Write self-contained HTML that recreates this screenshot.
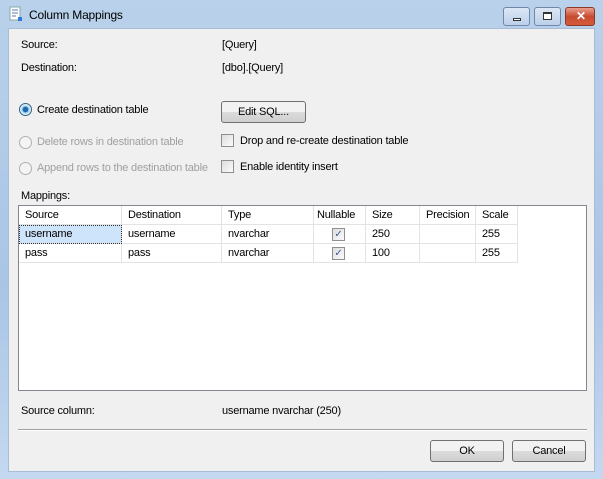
<!DOCTYPE html>
<html><head><style>
*{margin:0;padding:0;box-sizing:border-box}
body{width:603px;height:479px;overflow:hidden;font-family:"Liberation Sans",sans-serif;font-size:11px;letter-spacing:-0.2px;color:#000;
background:linear-gradient(#b9d1ea,#a9c5e6 60%,#c4d9f0);position:relative}
.a{position:absolute;white-space:nowrap}
#client{position:absolute;left:8px;top:28px;width:587px;height:444px;background:#f0f0f0;border:1px solid #a8bcd4}
.btn{position:absolute;border:1px solid #707070;border-radius:3px;background:linear-gradient(#f2f2f2 50%,#dcdcdc 50%,#cfcfcf);text-align:center}
.cb{position:absolute;width:13px;height:13px;border:1px solid #8f8f8f;background:linear-gradient(135deg,#ddd,#fbfbfb)}
.rad{position:absolute;width:13px;height:13px;border-radius:50%;border:1px solid #b0b0b0;background:#f4f4f4}
.dis{color:#a0a0a0}
.tb{position:absolute;left:18px;top:205px;width:569px;height:186px;background:#fff;border:1px solid #828790}
.cell{position:absolute;height:19px;line-height:19px;padding-left:6px;border-right:1px solid #e3e3e3;border-bottom:1px solid #e3e3e3}
.wb{position:absolute;top:7px;height:19px;border:1px solid #6f87a8;border-radius:3px;background:linear-gradient(#dbe7f5,#bcd0ea)}
</style></head><body>
<svg class="a" style="left:9px;top:6px" width="14" height="16"><rect x="1" y="1" width="10" height="13" fill="#fff" stroke="#8aa"/><path d="M3 4h6M3 7h6M3 10h4" stroke="#67a" /><rect x="9" y="11" width="4" height="4" fill="#2a7ad8"/></svg>
<div class="a" style="left:29px;top:8px;font-size:12px;color:#000">Column Mappings</div>
<div class="wb" style="left:503px;width:27px"><div class="a" style="left:9px;top:10px;width:8px;height:3px;border:1px solid #333;background:#fff"></div></div>
<div class="wb" style="left:534px;width:27px"><div class="a" style="left:8px;top:4px;width:9px;height:8px;border:1px solid #333;border-top-width:2px;background:#fff"></div></div>
<div class="wb" style="left:565px;width:30px;border-color:#8b3a2a;background:linear-gradient(#e8a090,#c84b30 50%,#d55a3b)"><div class="a" style="left:10px;top:1px;color:#fff;font-weight:bold;font-size:12px">✕</div></div>
<div id="client"></div>
<div class="a" style="left:21px;top:39px">Source:</div>
<div class="a" style="left:222px;top:39px">[Query]</div>
<div class="a" style="left:21px;top:62px">Destination:</div>
<div class="a" style="left:222px;top:62px">[dbo].[Query]</div>
<div class="rad" style="left:19px;top:103px;border-color:#2c628b;background:radial-gradient(circle,#1b6bb0 0 2.5px,#8ec3ea 3px,#e8f2fb 5px)"></div>
<div class="a" style="left:37px;top:104px">Create destination table</div>
<div class="rad" style="left:19px;top:136px"></div>
<div class="a dis" style="left:37px;top:136px">Delete rows in destination table</div>
<div class="rad" style="left:19px;top:162px"></div>
<div class="a dis" style="left:37px;top:162px">Append rows to the destination table</div>
<div class="btn" style="left:221px;top:101px;width:85px;height:22px;line-height:20px">Edit SQL...</div>
<div class="cb" style="left:221px;top:134px"></div>
<div class="a" style="left:240px;top:135px">Drop and re-create destination table</div>
<div class="cb" style="left:221px;top:160px"></div>
<div class="a" style="left:240px;top:161px">Enable identity insert</div>
<div class="a" style="left:21px;top:190px">Mappings:</div>
<div class="tb">
<div class="cell" style="left:0;top:0;width:103px">Source</div>
<div class="cell" style="left:103px;top:0;width:100px">Destination</div>
<div class="cell" style="left:203px;top:0;width:92px">Type</div>
<div class="cell" style="left:295px;top:0;width:52px;padding-left:3px">Nullable</div>
<div class="cell" style="left:347px;top:0;width:54px">Size</div>
<div class="cell" style="left:401px;top:0;width:56px">Precision</div>
<div class="cell" style="left:457px;top:0;width:42px">Scale</div>
<div class="cell" style="left:0;top:19px;width:103px;background:#cde4fa;outline:1px dotted #333;outline-offset:-1px">username</div>
<div class="cell" style="left:103px;top:19px;width:100px">username</div>
<div class="cell" style="left:203px;top:19px;width:92px">nvarchar</div>
<div class="cell" style="left:295px;top:19px;width:52px"><div class="cb" style="left:18px;top:3px;color:#3a5a9a;font-size:10px;line-height:11px;text-align:center">✓</div></div>
<div class="cell" style="left:347px;top:19px;width:54px">250</div>
<div class="cell" style="left:401px;top:19px;width:56px"></div>
<div class="cell" style="left:457px;top:19px;width:42px">255</div>
<div class="cell" style="left:0;top:38px;width:103px">pass</div>
<div class="cell" style="left:103px;top:38px;width:100px">pass</div>
<div class="cell" style="left:203px;top:38px;width:92px">nvarchar</div>
<div class="cell" style="left:295px;top:38px;width:52px"><div class="cb" style="left:18px;top:3px;color:#3a5a9a;font-size:10px;line-height:11px;text-align:center">✓</div></div>
<div class="cell" style="left:347px;top:38px;width:54px">100</div>
<div class="cell" style="left:401px;top:38px;width:56px"></div>
<div class="cell" style="left:457px;top:38px;width:42px">255</div>
</div>
<div class="a" style="left:21px;top:405px">Source column:</div>
<div class="a" style="left:222px;top:405px">username nvarchar (250)</div>
<div class="a" style="left:18px;top:429px;width:569px;height:2px;border-top:1px solid #a0a0a0;border-bottom:1px solid #fff"></div>
<div class="btn" style="left:430px;top:440px;width:74px;height:22px;line-height:20px">OK</div>
<div class="btn" style="left:512px;top:440px;width:74px;height:22px;line-height:20px">Cancel</div>
</body></html>
